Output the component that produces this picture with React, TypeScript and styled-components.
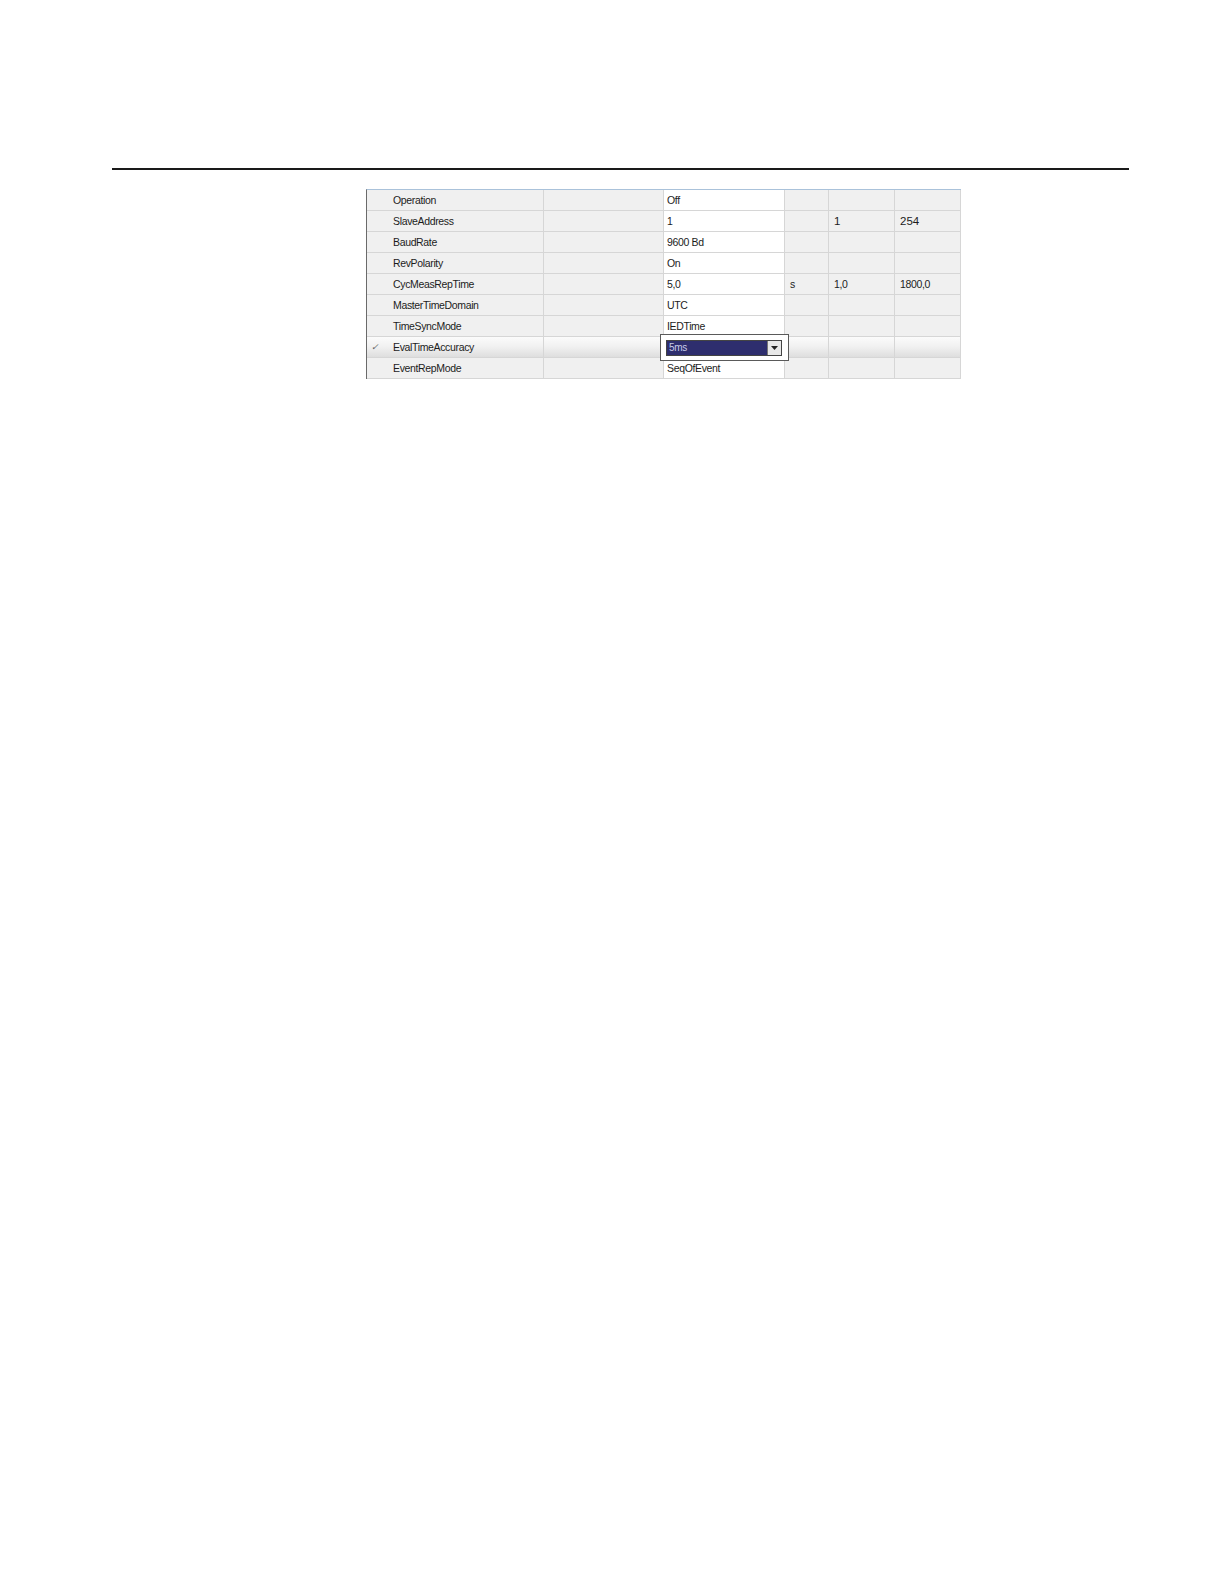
import React from "react";
import styled, { createGlobalStyle } from "styled-components";

const GlobalStyle = createGlobalStyle`
	html, body {
		margin: 0;
		padding: 0;
		background: #ffffff;
		overflow: hidden;
	}
	body {
		font-family: "Liberation Sans", Arial, sans-serif;
		color: #111;
	}
`;

const Page = styled.div`
	padding-top: 168px;
	padding-bottom: 200px;
`;

const Rule = styled.div`
	margin-left: 112px;
	width: 1017px;
	height: 2px;
	background: #1a1a1a;
`;

const Grid = styled.div`
	margin-left: 366px;
	margin-top: 19px;
	width: 594px;
	overflow: hidden;
	border-top: 1px solid #aac2da;
	border-left: 1px solid #6a6a6a;
`;

const Row = styled.div<{ $selected?: boolean }>`
	display: grid;
	grid-template-columns: 177px 120px 121px 44px 66px 66px;
	height: 21px;
	background: ${(p) =>
		p.$selected ? "linear-gradient(#fbfbfb 0%, #f1f1f1 45%, #dcdcdc 100%)" : "#f0f0f0"};
`;

const Cell = styled.div<{ $white?: boolean; $pad?: number; $big?: boolean }>`
	position: relative;
	box-sizing: border-box;
	display: flex;
	align-items: center;
	padding-left: ${(p) => p.$pad ?? 5}px;
	border-right: 1px solid #d6d6d6;
	border-bottom: 1px solid #d6d6d6;
	background: ${(p) => (p.$white ? "#ffffff" : "transparent")};
	font-size: ${(p) => (p.$big ? "11.5px" : "10.5px")};
	letter-spacing: ${(p) => (p.$big ? "0" : "-0.35px")};
	color: #1c1c1c;
	white-space: nowrap;
`;

const Check = styled.span`
	position: absolute;
	left: 4px;
	top: 5px;
	font-size: 9px;
	color: #666;
	font-style: italic;
`;

const DropFrame = styled.div`
	position: absolute;
	left: -4px;
	top: -3px;
	width: 129px;
	height: 27px;
	box-sizing: border-box;
	border: 1px solid #5a5a5a;
	background: #ffffff;
	padding: 5px 6px 0 5px;
	z-index: 2;
`;

const Select = styled.div`
	display: flex;
	height: 16px;
	box-sizing: border-box;
	border: 1px solid #444;
	background: #2e2e6e;
`;

const SelectText = styled.span`
	flex: 1;
	font-size: 10px;
	letter-spacing: -0.3px;
	color: #c9cce8;
	padding-left: 2px;
	line-height: 14px;
`;

const SelectButton = styled.span`
	width: 13px;
	display: flex;
	align-items: center;
	justify-content: center;
	background: #e8e8e8;
	border-left: 1px solid #777;
`;

type Param = {
	name: string;
	value: string;
	unit?: string;
	min?: string;
	max?: string;
	selected?: boolean;
};

const params: Param[] = [
	{ name: "Operation", value: "Off" },
	{ name: "SlaveAddress", value: "1", min: "1", max: "254" },
	{ name: "BaudRate", value: "9600 Bd" },
	{ name: "RevPolarity", value: "On" },
	{ name: "CycMeasRepTime", value: "5,0", unit: "s", min: "1,0", max: "1800,0" },
	{ name: "MasterTimeDomain", value: "UTC" },
	{ name: "TimeSyncMode", value: "IEDTime" },
	{ name: "EvalTimeAccuracy", value: "5ms", selected: true },
	{ name: "EventRepMode", value: "SeqOfEvent" },
];

const App = () => {
	return (
		<Page>
			<GlobalStyle />
			<Rule />
			<Grid>
				{params.map((p) => (
					<Row key={p.name} $selected={p.selected}>
						<Cell $pad={26}>
							{p.selected && <Check>✓</Check>}
							{p.name}
						</Cell>
						<Cell />
						<Cell $white={!p.selected} $pad={3}>
							{p.selected ? (
								<DropFrame>
									<Select>
										<SelectText>{p.value}</SelectText>
										<SelectButton>
											<svg width="7" height="4" viewBox="0 0 7 4">
												<path d="M0 0h7L3.5 4z" fill="#222" />
											</svg>
										</SelectButton>
									</Select>
								</DropFrame>
							) : (
								p.value
							)}
						</Cell>
						<Cell>{p.unit}</Cell>
						<Cell $big={p.min === "1"}>{p.min}</Cell>
						<Cell $big={p.max === "254"}>{p.max}</Cell>
					</Row>
				))}
			</Grid>
		</Page>
	);
};

export default App;
